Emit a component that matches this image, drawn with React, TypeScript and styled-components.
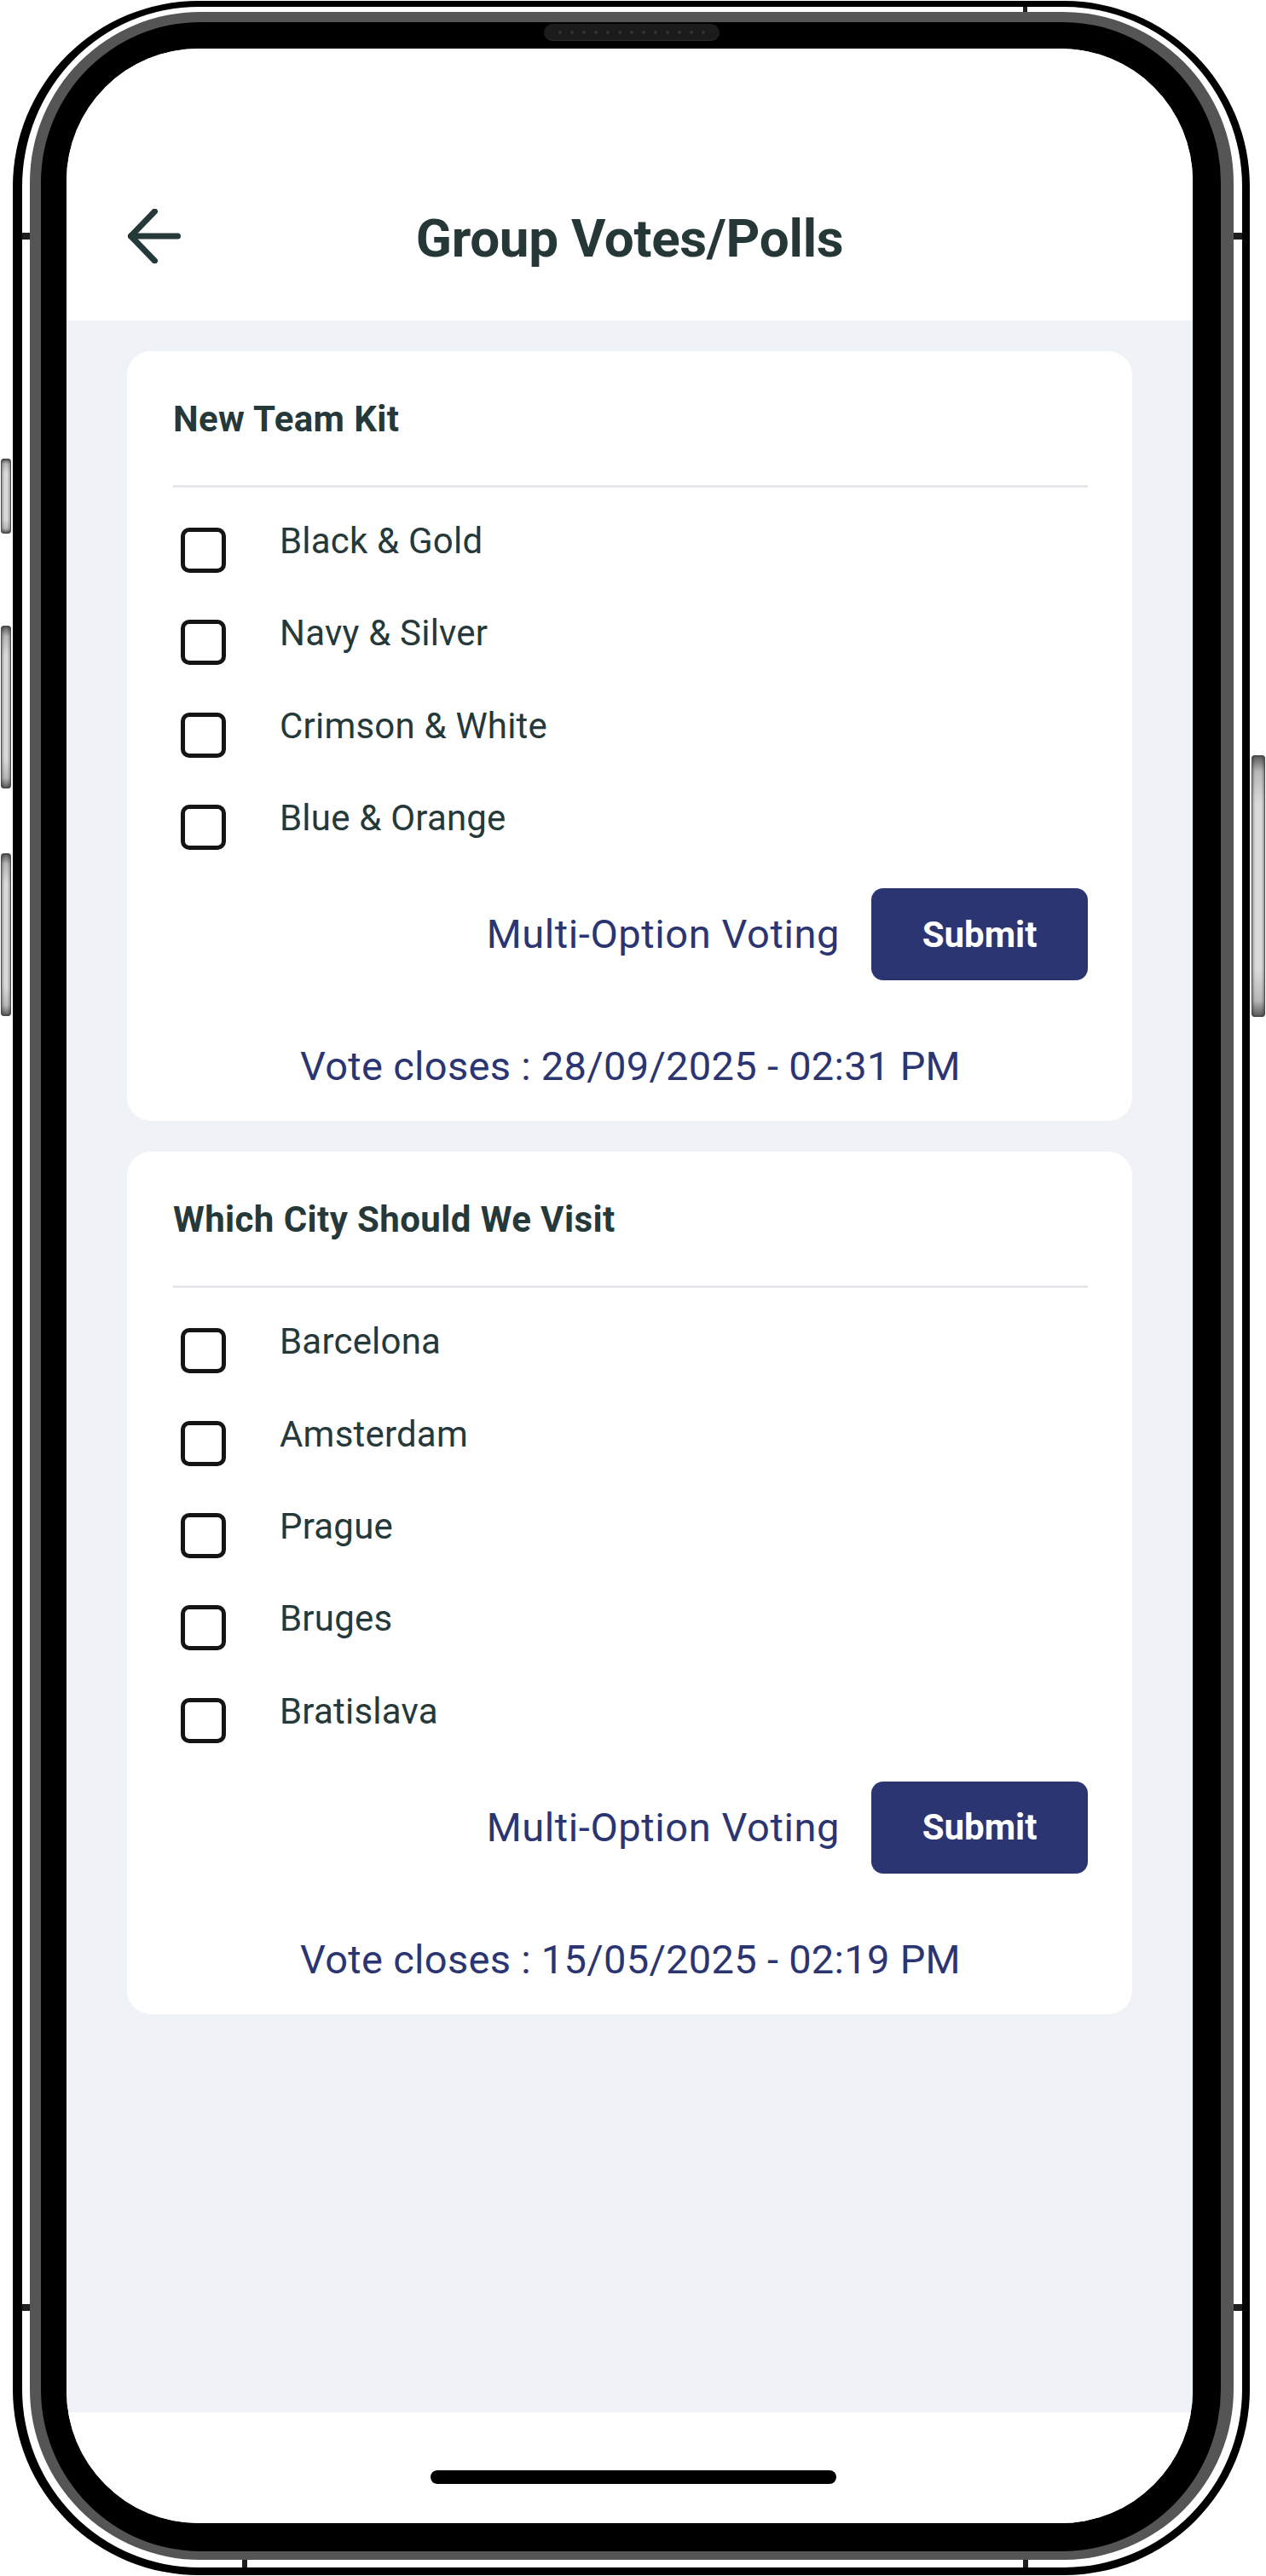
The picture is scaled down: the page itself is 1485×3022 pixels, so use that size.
import React, { useState } from "react";
import styled, { createGlobalStyle } from "styled-components";

const NAVY = "#2b3572";
const INK = "#26393a";

const GlobalStyle = createGlobalStyle`
  html, body { margin: 0; padding: 0; background: #ffffff; }
  body { font-family: Roboto, "Liberation Sans", Arial, sans-serif; }
  * { box-sizing: border-box; }
`;

const Stage = styled.div`
  display: flex;
  width: 1485px;
  height: 3022px;
  overflow: hidden;
  background: #ffffff;
`;

const LeftRail = styled.div`
  width: 15px;
  flex: none;
  display: flex;
  flex-direction: column;
  padding-left: 1px;
`;

const RightRail = styled.div`
  width: 19px;
  flex: none;
  display: flex;
  flex-direction: column;
  padding-left: 2px;
`;

const SideButton = styled.div<{ $top: number; $height: number; $width: number }>`
  margin-top: ${(p) => p.$top}px;
  width: ${(p) => p.$width}px;
  height: ${(p) => p.$height}px;
  border: 1px solid #4a4a4a;
  border-radius: 3px;
  background: linear-gradient(
    to bottom,
    #5c5c5c 0%,
    #b8b8b8 6%,
    #dadada 18%,
    #dadada 82%,
    #b8b8b8 94%,
    #5c5c5c 100%
  );
  box-shadow: inset 2px 0 2px rgba(0, 0, 0, 0.25), inset -2px 0 2px rgba(0, 0, 0, 0.25);
`;

const Phone = styled.div`
  position: relative;
  flex: none;
  margin-top: 1px;
  width: 1451px;
  height: 3020px;
  border-style: solid;
  border-color: #000;
  border-width: 7px 9px 9px 11px;
  padding: 6px 10px 9px 9px;
  border-radius: 218px;
  background: #fff;
`;

const Tick = styled.span<{ $x: number; $y: number; $w: number; $h: number }>`
  position: absolute;
  left: ${(p) => p.$x}px;
  top: ${(p) => p.$y}px;
  width: ${(p) => p.$w}px;
  height: ${(p) => p.$h}px;
  background: #1e1e1e;
`;

const Ring = styled.div`
  position: relative;
  height: 100%;
  border-style: solid;
  border-color: #555555;
  border-width: 12px 15px 10px 13px;
  background: #000;
  padding: 31px 33px 33px 30px;
  border-radius: 200px;
`;

const Speaker = styled.div`
  position: absolute;
  top: 2px;
  left: 50%;
  margin-left: 1px;
  transform: translateX(-50%);
  width: 206px;
  height: 20px;
  border-radius: 10px;
  background: #1b1b1b;
  box-shadow: inset 0 -1px 1px rgba(255, 255, 255, 0.08);
  display: flex;
  align-items: center;
  justify-content: center;
  gap: 10px;
`;

const SpeakerDot = styled.span`
  width: 4px;
  height: 4px;
  border-radius: 50%;
  background: #343434;
`;

const Screen = styled.div`
  height: 100%;
  border-radius: 155px;
  overflow: hidden;
  display: flex;
  flex-direction: column;
  background: #fff;
`;

const Header = styled.header`
  flex: none;
  height: 319px;
  display: grid;
  grid-template-columns: 1fr auto 1fr;
  align-items: center;
  padding: 188px 71px 62px 71px;
  background: #fff;
`;

const BackButton = styled.button`
  justify-self: start;
  width: 64px;
  height: 64px;
  margin-bottom: 5px;
  padding: 0;
  border: none;
  background: transparent;
  cursor: pointer;
  display: flex;
`;

const Title = styled.h1`
  margin: 0;
  font-family: Roboto, "Liberation Sans", Arial, sans-serif;
  font-weight: 700;
  font-size: 62px;
  line-height: 69px;
  letter-spacing: -0.3px;
  color: #253736;
  white-space: nowrap;
`;

const Content = styled.main`
  flex: 1;
  display: flex;
  flex-direction: column;
  gap: 36px;
  padding: 36px 71px;
  background: #eff2f7;
`;

const Card = styled.section`
  background: #fff;
  border-radius: 28px;
  padding: 56px 52px 36px 54px;
  display: flex;
  flex-direction: column;
`;

const CardTitle = styled.h2`
  margin: 0;
  font-weight: 700;
  font-size: 42px;
  line-height: 48px;
  letter-spacing: 0.4px;
  color: ${INK};
`;

const Divider = styled.div`
  margin-top: 53px;
  height: 3px;
  background: #e6e8eb;
`;

const Options = styled.div`
  margin-top: 47px;
  display: flex;
  flex-direction: column;
  gap: 55.4px;
`;

const OptionRow = styled.label`
  display: flex;
  align-items: flex-start;
  gap: 63px;
  padding-left: 9px;
  cursor: pointer;
`;

const Box = styled.span<{ $checked: boolean }>`
  flex: none;
  width: 53px;
  height: 53px;
  border: 5px solid #141414;
  border-radius: 10px;
  background: ${(p) => (p.$checked ? "#141414" : "#fff")};
  display: flex;
  align-items: center;
  justify-content: center;
`;

const OptionLabel = styled.span`
  font-weight: 400;
  font-size: 42px;
  line-height: 32px;
  letter-spacing: 0.2px;
  color: ${INK};
`;

const Footer = styled.div`
  margin-top: 45px;
  display: flex;
  justify-content: flex-end;
  align-items: center;
  gap: 37px;
`;

const VoteType = styled.span`
  font-weight: 400;
  font-size: 47px;
  line-height: 56px;
  letter-spacing: 0.6px;
  color: ${NAVY};
`;

const SubmitButton = styled.button`
  width: 254px;
  height: 108px;
  border: none;
  border-radius: 14px;
  background: ${NAVY};
  color: #fff;
  font-family: Roboto, "Liberation Sans", Arial, sans-serif;
  font-weight: 700;
  font-size: 42px;
  cursor: pointer;
`;

const Closes = styled.p`
  margin: 73px 0 0;
  text-align: center;
  font-weight: 400;
  font-size: 47px;
  line-height: 56px;
  letter-spacing: 0.3px;
  color: ${NAVY};
`;

const BottomBar = styled.div`
  flex: none;
  height: 130px;
  padding-top: 68px;
  background: #fff;
  display: flex;
  justify-content: center;
`;

const HomeIndicator = styled.div`
  width: 476px;
  height: 16px;
  margin-left: 9px;
  border-radius: 8px;
  background: #000;
`;

type Poll = { title: string; options: string[]; closes: string };

const polls: Poll[] = [
  {
    title: "New Team Kit",
    options: ["Black & Gold", "Navy & Silver", "Crimson & White", "Blue & Orange"],
    closes: "Vote closes : 28/09/2025 - 02:31 PM",
  },
  {
    title: "Which City Should We Visit",
    options: ["Barcelona", "Amsterdam", "Prague", "Bruges", "Bratislava"],
    closes: "Vote closes : 15/05/2025 - 02:19 PM",
  },
];

function PollCard({ poll }: { poll: Poll }) {
  const [checked, setChecked] = useState<boolean[]>(poll.options.map(() => false));
  return (
    <Card>
      <CardTitle>{poll.title}</CardTitle>
      <Divider />
      <Options>
        {poll.options.map((opt, i) => (
          <OptionRow
            key={opt}
            onClick={() => setChecked((c) => c.map((v, j) => (j === i ? !v : v)))}
          >
            <Box $checked={checked[i]} role="checkbox" aria-checked={checked[i]}>
              {checked[i] && (
                <svg width="32" height="32" viewBox="0 0 24 24" fill="none" stroke="#fff" strokeWidth="3" strokeLinecap="round" strokeLinejoin="round">
                  <path d="M5 12l5 5L19 7" />
                </svg>
              )}
            </Box>
            <OptionLabel>{opt}</OptionLabel>
          </OptionRow>
        ))}
      </Options>
      <Footer>
        <VoteType>Multi-Option Voting</VoteType>
        <SubmitButton>Submit</SubmitButton>
      </Footer>
      <Closes>{poll.closes}</Closes>
    </Card>
  );
}

export default function App() {
  return (
    <>
      <GlobalStyle />
      <Stage>
        <LeftRail>
          <SideButton $top={538} $height={88} $width={12} />
          <SideButton $top={108} $height={191} $width={12} />
          <SideButton $top={76} $height={191} $width={12} />
        </LeftRail>
        <Phone>
          <Tick $x={1174} $y={0} $w={5} $h={6} />
          <Tick $x={258} $y={2995} $w={6} $h={9} />
          <Tick $x={1174} $y={2995} $w={6} $h={9} />
          <Tick $x={0} $y={265} $w={9} $h={8} />
          <Tick $x={0} $y={2695} $w={9} $h={8} />
          <Tick $x={1421} $y={265} $w={10} $h={8} />
          <Tick $x={1421} $y={2695} $w={10} $h={8} />
          <Ring>
            <Speaker>
              {Array.from({ length: 13 }).map((_, i) => (
                <SpeakerDot key={i} />
              ))}
            </Speaker>
            <Screen>
              <Header>
                <BackButton aria-label="Back">
                  <svg width="64" height="64" viewBox="0 0 64 64" fill="none" stroke={INK} strokeWidth="7" strokeLinecap="round" strokeLinejoin="round">
                    <path d="M59.5 32H4.5" />
                    <path d="M32.5 3L4.5 32l28 29" />
                  </svg>
                </BackButton>
                <Title>Group Votes/Polls</Title>
                <span />
              </Header>
              <Content>
                {polls.map((p) => (
                  <PollCard key={p.title} poll={p} />
                ))}
              </Content>
              <BottomBar>
                <HomeIndicator />
              </BottomBar>
            </Screen>
          </Ring>
        </Phone>
        <RightRail>
          <SideButton $top={886} $height={307} $width={16} />
        </RightRail>
      </Stage>
    </>
  );
}
